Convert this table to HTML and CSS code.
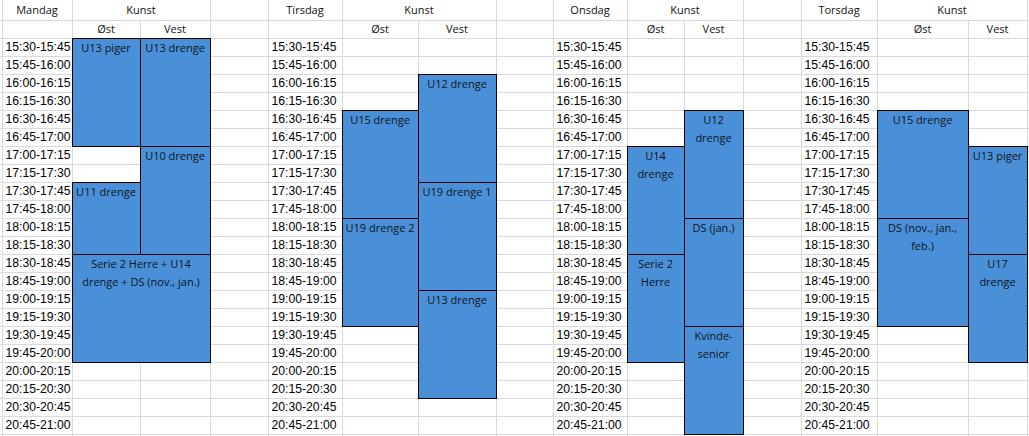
FILE: index.html
```html
<!DOCTYPE html>
<html lang="da">
<head>
<meta charset="utf-8">
<title>Træningsplan Kunst</title>
<link rel="stylesheet" href="styles.css">
</head>
<body>
<table class="sheet">
<colgroup>
<col class="w-edge"><col class="w-70"><col class="w-68"><col class="w-70"><col class="w-58">
<col class="w-74"><col class="w-76"><col class="w-78"><col class="w-57">
<col class="w-74"><col class="w-57"><col class="w-59"><col class="w-58">
<col class="w-76"><col class="w-91"><col class="w-59"><col class="w-edge">
</colgroup>
<tbody>
<tr class="hd">
<td></td><td class="h">Mandag</td><td class="h" colspan="2">Kunst</td><td></td>
<td class="h">Tirsdag</td><td class="h" colspan="2">Kunst</td><td></td>
<td class="h">Onsdag</td><td class="h" colspan="2">Kunst</td><td></td>
<td class="h">Torsdag</td><td class="h" colspan="2">Kunst</td><td></td>
</tr>
<tr class="r">
<td></td><td></td><td class="h">Øst</td><td class="h">Vest</td><td></td>
<td></td><td class="h">Øst</td><td class="h">Vest</td><td></td>
<td></td><td class="h">Øst</td><td class="h">Vest</td><td></td>
<td></td><td class="h">Øst</td><td class="h">Vest</td><td></td>
</tr>
<tr class="r">
<td></td><td class="tm">15:30-15:45</td><td class="b" rowspan="6">U13 piger</td><td class="b" rowspan="6">U13 drenge</td><td></td>
<td class="tm">15:30-15:45</td><td></td><td></td><td></td>
<td class="tm">15:30-15:45</td><td></td><td></td><td></td>
<td class="tm">15:30-15:45</td><td></td><td></td><td></td>
</tr>
<tr class="r">
<td></td><td class="tm">15:45-16:00</td><td></td>
<td class="tm">15:45-16:00</td><td></td><td></td><td></td>
<td class="tm">15:45-16:00</td><td></td><td></td><td></td>
<td class="tm">15:45-16:00</td><td></td><td></td><td></td>
</tr>
<tr class="r">
<td></td><td class="tm">16:00-16:15</td><td></td>
<td class="tm">16:00-16:15</td><td></td><td class="b" rowspan="6">U12 drenge</td><td></td>
<td class="tm">16:00-16:15</td><td></td><td></td><td></td>
<td class="tm">16:00-16:15</td><td></td><td></td><td></td>
</tr>
<tr class="r">
<td></td><td class="tm">16:15-16:30</td><td></td>
<td class="tm">16:15-16:30</td><td></td><td></td>
<td class="tm">16:15-16:30</td><td></td><td></td><td></td>
<td class="tm">16:15-16:30</td><td></td><td></td><td></td>
</tr>
<tr class="r">
<td></td><td class="tm">16:30-16:45</td><td></td>
<td class="tm">16:30-16:45</td><td class="b" rowspan="6">U15 drenge</td><td></td>
<td class="tm">16:30-16:45</td><td></td><td class="b" rowspan="6">U12<br>drenge</td><td></td>
<td class="tm">16:30-16:45</td><td class="b" rowspan="6">U15 drenge</td><td></td><td></td>
</tr>
<tr class="r">
<td></td><td class="tm">16:45-17:00</td><td></td>
<td class="tm">16:45-17:00</td><td></td>
<td class="tm">16:45-17:00</td><td></td><td></td>
<td class="tm">16:45-17:00</td><td></td><td></td>
</tr>
<tr class="r">
<td></td><td class="tm">17:00-17:15</td><td></td><td class="b" rowspan="6">U10 drenge</td><td></td>
<td class="tm">17:00-17:15</td><td></td>
<td class="tm">17:00-17:15</td><td class="b" rowspan="6">U14<br>drenge</td><td></td>
<td class="tm">17:00-17:15</td><td class="b" rowspan="6">U13 piger</td><td></td>
</tr>
<tr class="r">
<td></td><td class="tm">17:15-17:30</td><td></td><td></td>
<td class="tm">17:15-17:30</td><td></td>
<td class="tm">17:15-17:30</td><td></td>
<td class="tm">17:15-17:30</td><td></td>
</tr>
<tr class="r">
<td></td><td class="tm">17:30-17:45</td><td class="b" rowspan="4">U11 drenge</td><td></td>
<td class="tm">17:30-17:45</td><td class="b" rowspan="6">U19 drenge 1</td><td></td>
<td class="tm">17:30-17:45</td><td></td>
<td class="tm">17:30-17:45</td><td></td>
</tr>
<tr class="r">
<td></td><td class="tm">17:45-18:00</td><td></td>
<td class="tm">17:45-18:00</td><td></td>
<td class="tm">17:45-18:00</td><td></td>
<td class="tm">17:45-18:00</td><td></td>
</tr>
<tr class="r">
<td></td><td class="tm">18:00-18:15</td><td></td>
<td class="tm">18:00-18:15</td><td class="b" rowspan="6">U19 drenge 2</td><td></td>
<td class="tm">18:00-18:15</td><td class="b" rowspan="6">DS (jan.)</td><td></td>
<td class="tm">18:00-18:15</td><td class="b" rowspan="6">DS (nov., jan.,<br>feb.)</td><td></td>
</tr>
<tr class="r">
<td></td><td class="tm">18:15-18:30</td><td></td>
<td class="tm">18:15-18:30</td><td></td>
<td class="tm">18:15-18:30</td><td></td>
<td class="tm">18:15-18:30</td><td></td>
</tr>
<tr class="r">
<td></td><td class="tm">18:30-18:45</td><td class="b" rowspan="6" colspan="2">Serie 2 Herre + U14<br>drenge + DS (nov., jan.)</td><td></td>
<td class="tm">18:30-18:45</td><td></td>
<td class="tm">18:30-18:45</td><td class="b" rowspan="6">Serie 2<br>Herre</td><td></td>
<td class="tm">18:30-18:45</td><td class="b" rowspan="6">U17<br>drenge</td><td></td>
</tr>
<tr class="r">
<td></td><td class="tm">18:45-19:00</td><td></td>
<td class="tm">18:45-19:00</td><td></td>
<td class="tm">18:45-19:00</td><td></td>
<td class="tm">18:45-19:00</td><td></td>
</tr>
<tr class="r">
<td></td><td class="tm">19:00-19:15</td><td></td>
<td class="tm">19:00-19:15</td><td class="b" rowspan="6">U13 drenge</td><td></td>
<td class="tm">19:00-19:15</td><td></td>
<td class="tm">19:00-19:15</td><td></td>
</tr>
<tr class="r">
<td></td><td class="tm">19:15-19:30</td><td></td>
<td class="tm">19:15-19:30</td><td></td>
<td class="tm">19:15-19:30</td><td></td>
<td class="tm">19:15-19:30</td><td></td>
</tr>
<tr class="r">
<td></td><td class="tm">19:30-19:45</td><td></td>
<td class="tm">19:30-19:45</td><td></td><td></td>
<td class="tm">19:30-19:45</td><td class="b" rowspan="6">Kvinde-<br>senior</td><td></td>
<td class="tm">19:30-19:45</td><td></td><td></td>
</tr>
<tr class="r">
<td></td><td class="tm">19:45-20:00</td><td></td>
<td class="tm">19:45-20:00</td><td></td><td></td>
<td class="tm">19:45-20:00</td><td></td>
<td class="tm">19:45-20:00</td><td></td><td></td>
</tr>
<tr class="r">
<td></td><td class="tm">20:00-20:15</td><td></td><td></td><td></td>
<td class="tm">20:00-20:15</td><td></td><td></td>
<td class="tm">20:00-20:15</td><td></td><td></td>
<td class="tm">20:00-20:15</td><td></td><td></td><td></td>
</tr>
<tr class="r">
<td></td><td class="tm">20:15-20:30</td><td></td><td></td><td></td>
<td class="tm">20:15-20:30</td><td></td><td></td>
<td class="tm">20:15-20:30</td><td></td><td></td>
<td class="tm">20:15-20:30</td><td></td><td></td><td></td>
</tr>
<tr class="r">
<td></td><td class="tm">20:30-20:45</td><td></td><td></td><td></td>
<td class="tm">20:30-20:45</td><td></td><td></td><td></td>
<td class="tm">20:30-20:45</td><td></td><td></td>
<td class="tm">20:30-20:45</td><td></td><td></td><td></td>
</tr>
<tr class="r">
<td></td><td class="tm">20:45-21:00</td><td></td><td></td><td></td>
<td class="tm">20:45-21:00</td><td></td><td></td><td></td>
<td class="tm">20:45-21:00</td><td></td><td></td>
<td class="tm">20:45-21:00</td><td></td><td></td><td></td>
</tr>
<tr class="r">
<td></td><td></td><td></td><td></td><td></td>
<td></td><td></td><td></td><td></td>
<td></td><td></td><td></td><td></td>
<td></td><td></td><td></td><td></td>
</tr>
</tbody>
</table>
</body>
</html>
```

FILE: styles.css
```css
html, body {
  margin: 0;
  padding: 0;
  background: #ffffff;
  overflow: hidden;
}

.sheet {
  border-collapse: collapse;
  table-layout: fixed;
  width: 1029px;
  font-family: "Open Sans", "Liberation Sans", sans-serif;
  font-size: 11px;
  color: #111111;
}

.sheet col { border-right: 1px solid #dadada; }
.w-edge { width: 2px; }
.w-57 { width: 57px; }
.w-58 { width: 58px; }
.w-59 { width: 59px; }
.w-68 { width: 68px; }
.w-70 { width: 70px; }
.w-74 { width: 74px; }
.w-76 { width: 76px; }
.w-78 { width: 78px; }
.w-91 { width: 91px; }

.sheet tr { border-bottom: 1px solid #dadada; }
.hd { height: 20px; }
.r { height: 18px; }

.sheet td {
  padding: 0;
  line-height: 16px;
  white-space: nowrap;
  overflow: hidden;
  vertical-align: middle;
}

.h { text-align: center; }

.tm {
  font-family: "Liberation Sans", Arial, sans-serif;
  font-size: 12.2px;
  padding-left: 3px !important;
  color: #000000;
}

.b {
  background: #4a90d9;
  border: 1px solid #000000;
  text-align: center;
  vertical-align: top !important;
  line-height: 18px !important;
  color: #0f1520;
}
```
